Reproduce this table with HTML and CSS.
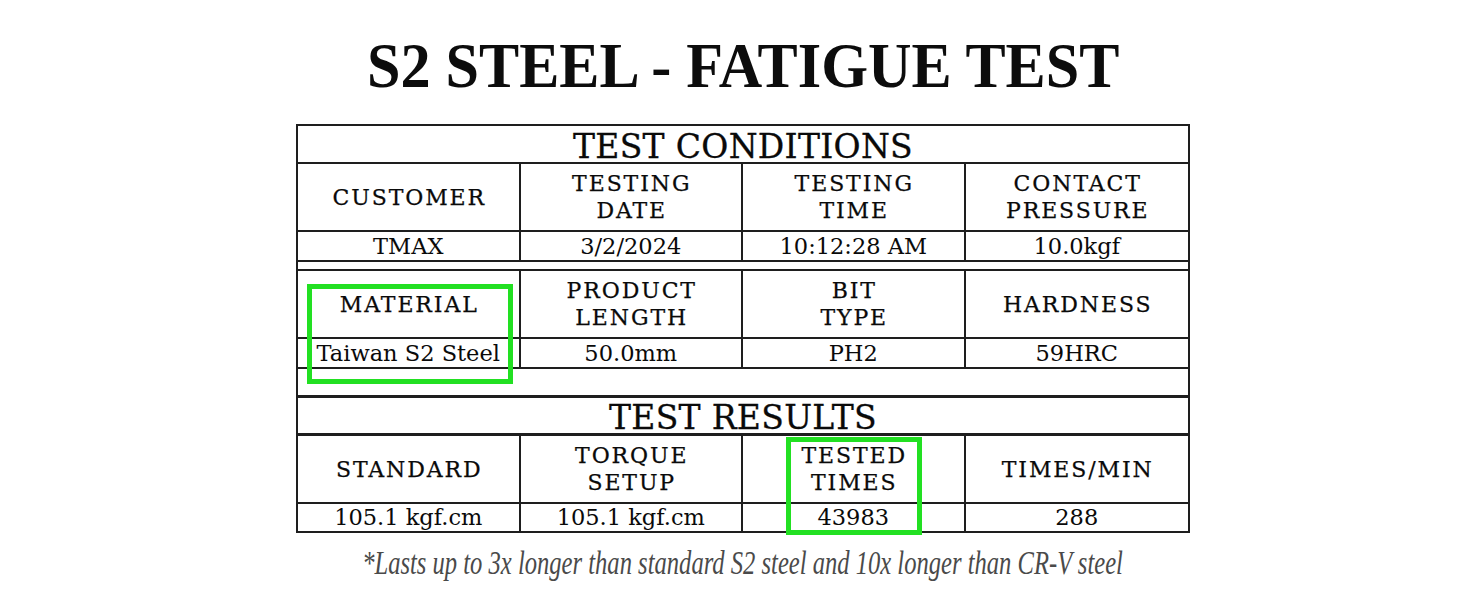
FILE: index.html
```html
<!DOCTYPE html>
<html lang="en">
<head>
<meta charset="utf-8">
<title>S2 Steel - Fatigue Test</title>
<link rel="stylesheet" href="styles.css">
</head>
<body>
<div class="page">
  <h1 class="title"><span>S2 STEEL - FATIGUE TEST</span></h1>
  <div class="sheet">
    <div class="grid">
      <div class="cell cap">TEST CONDITIONS</div>

      <div class="cell hd">CUSTOMER</div>
      <div class="cell hd">TESTING<br>DATE</div>
      <div class="cell hd">TESTING<br>TIME</div>
      <div class="cell hd last">CONTACT<br>PRESSURE</div>

      <div class="cell val">TMAX</div>
      <div class="cell val">3/2/2024</div>
      <div class="cell val">10:12:28 AM</div>
      <div class="cell val last">10.0kgf</div>

      <div class="cell gap"></div>

      <div class="cell hd">MATERIAL</div>
      <div class="cell hd">PRODUCT<br>LENGTH</div>
      <div class="cell hd">BIT<br>TYPE</div>
      <div class="cell hd last">HARDNESS</div>

      <div class="cell val">Taiwan S2 Steel</div>
      <div class="cell val">50.0mm</div>
      <div class="cell val">PH2</div>
      <div class="cell val last">59HRC</div>

      <div class="cell blank"></div>

      <div class="cell cap strong">TEST RESULTS</div>

      <div class="cell hd">STANDARD</div>
      <div class="cell hd">TORQUE<br>SETUP</div>
      <div class="cell hd">TESTED<br>TIMES</div>
      <div class="cell hd last">TIMES/MIN</div>

      <div class="cell val end">105.1 kgf.cm</div>
      <div class="cell val end">105.1 kgf.cm</div>
      <div class="cell val end">43983</div>
      <div class="cell val end last">288</div>
    </div>
    <div class="mark mark-material"></div>
    <div class="mark mark-tested"></div>
  </div>
  <p class="note"><span>*Lasts up to 3x longer than standard S2 steel and 10x longer than CR-V steel</span></p>
</div>
</body>
</html>
```

FILE: styles.css
```css
html, body {
  margin: 0;
  padding: 0;
  background: #ffffff;
}

body {
  width: 1464px;
  height: 600px;
  overflow: hidden;
  font-family: "Liberation Serif", "Times New Roman", serif;
  color: #111111;
}

.page {
  padding-top: 34px;
}

.title {
  margin: 0 0 0 296px;
  width: 894px;
  height: 64px;
  display: flex;
  justify-content: center;
  font-size: 64px;
  line-height: 64px;
  font-weight: bold;
  white-space: nowrap;
  color: #0c0c0c;
}

.title span {
  display: inline-block;
  transform: scaleX(0.94);
  transform-origin: center;
}

.sheet {
  position: relative;
  margin: 26px 0 0 296px;
  width: 894px;
}

.grid {
  display: grid;
  grid-template-columns: repeat(4, 1fr);
  border: 2px solid #1e1e1e;
  font-family: "DejaVu Serif", "Liberation Serif", serif;
  color: #0a0a0a;
}

.cell {
  box-sizing: border-box;
  display: flex;
  align-items: center;
  justify-content: center;
  text-align: center;
  border-right: 2px solid #1e1e1e;
  border-bottom: 2px solid #1e1e1e;
  white-space: nowrap;
}

.cell.last {
  border-right: none;
}

.cap {
  grid-column: 1 / -1;
  border-right: none;
  height: 38px;
  padding-top: 4px;
  font-size: 33px;
  line-height: 1;
  letter-spacing: 0.3px;
  -webkit-text-stroke: 0.3px #0a0a0a;
}

.cap.strong {
  border-bottom-width: 3px;
}

.hd {
  height: 68px;
  padding-left: 2px;
  font-size: 22px;
  line-height: 27px;
  letter-spacing: 1.9px;
  -webkit-text-stroke: 0.25px #0a0a0a;
}

.val {
  height: 30px;
  font-size: 22.5px;
  line-height: 1;
}

.val.end {
  height: 27px;
  border-bottom: none;
}

.gap {
  grid-column: 1 / -1;
  border-right: none;
  height: 9px;
}

.blank {
  grid-column: 1 / -1;
  border-right: none;
  height: 29px;
  border-bottom-width: 3px;
}

.mark {
  position: absolute;
  box-sizing: border-box;
  border: 5px solid #22e022;
}

.mark-material {
  left: 11px;
  top: 160px;
  width: 206px;
  height: 100px;
}

.mark-tested {
  left: 490px;
  top: 313px;
  width: 136px;
  height: 98px;
}

.note {
  margin: 12px 0 0 296px;
  width: 894px;
  display: flex;
  justify-content: center;
  font-size: 33px;
  line-height: 36px;
  font-style: italic;
  color: #4a4a4a;
  white-space: nowrap;
}

.note span {
  display: inline-block;
  transform: scaleX(0.745);
  transform-origin: center;
}
```
